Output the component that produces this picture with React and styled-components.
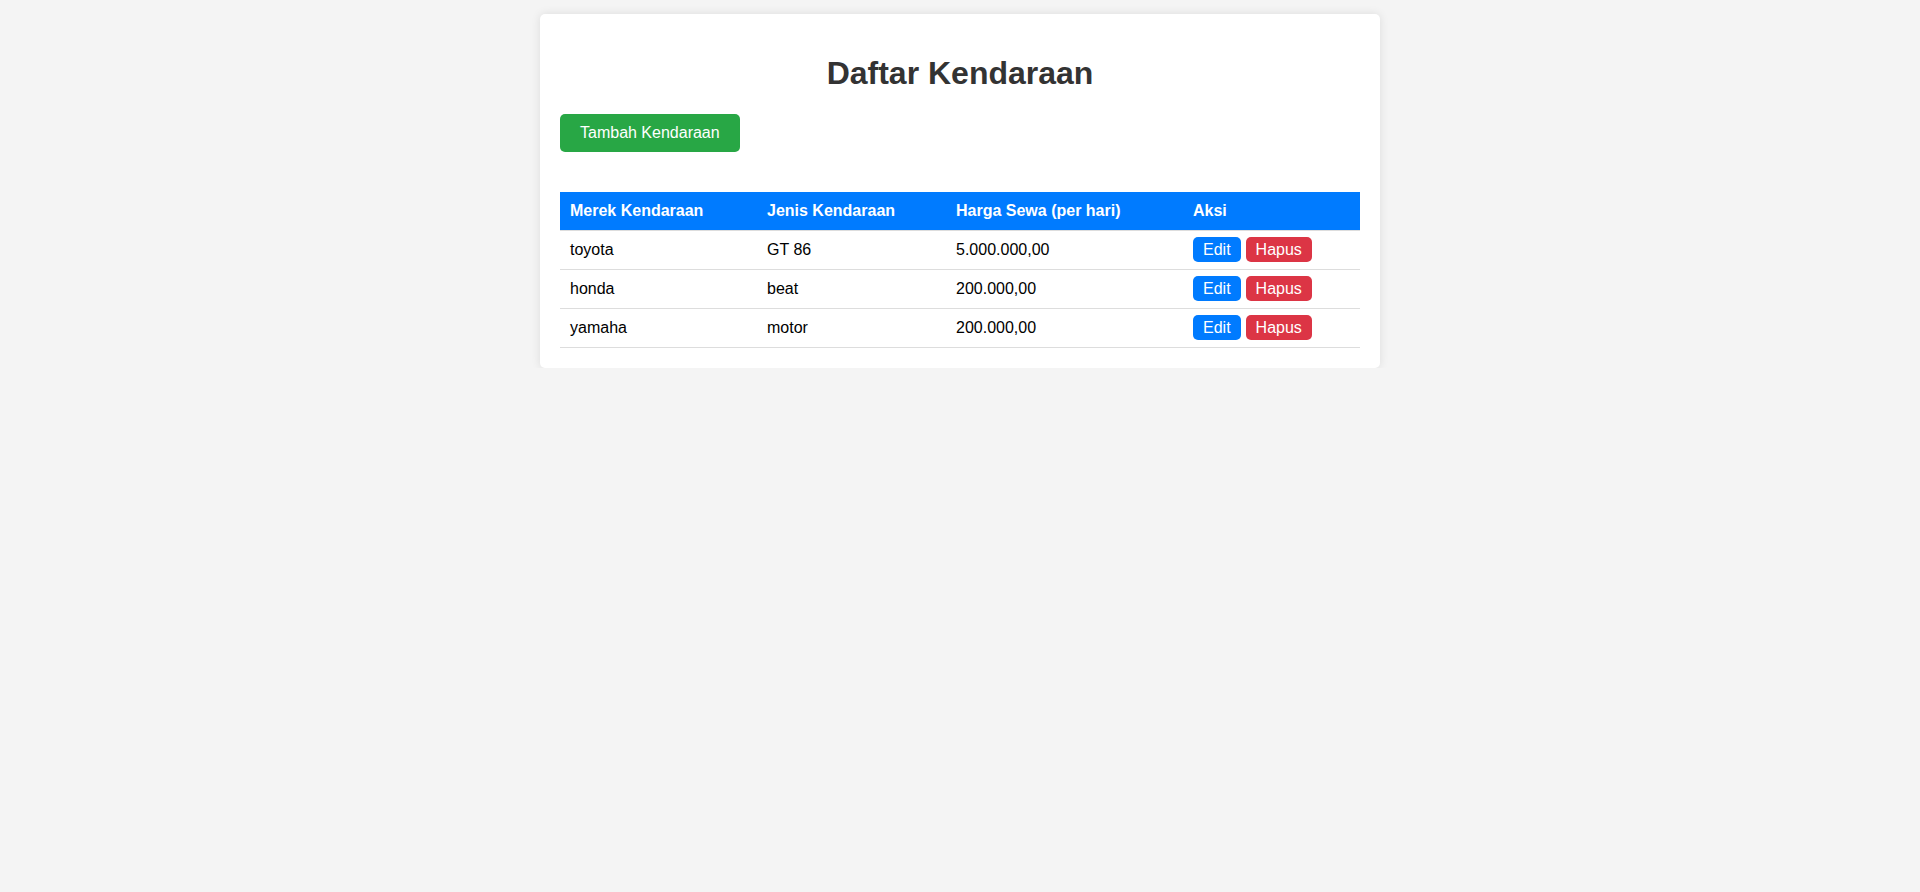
import React from 'react';
import styled, { createGlobalStyle } from 'styled-components';

const vehicles = [
  { id: 1, merek: 'toyota', jenis: 'GT 86', harga: '5.000.000,00' },
  { id: 2, merek: 'honda', jenis: 'beat', harga: '200.000,00' },
  { id: 3, merek: 'yamaha', jenis: 'motor', harga: '200.000,00' },
];

const columns = [
  { label: 'Merek Kendaraan', width: 197 },
  { label: 'Jenis Kendaraan', width: 189 },
  { label: 'Harga Sewa (per hari)', width: 237 },
  { label: 'Aksi', width: 177 },
];

export default function App() {
  return (
    <>
      <GlobalStyle />
      <Page>
        <Card>
          <Title>Daftar Kendaraan</Title>
          <AddButton>Tambah Kendaraan</AddButton>
          <Table>
            <thead>
              <tr>
                {columns.map(col => (
                  <Th key={col.label} $width={col.width}>
                    {col.label}
                  </Th>
                ))}
              </tr>
            </thead>
            <tbody>
              {vehicles.map(item => (
                <tr key={item.id}>
                  <Td>{item.merek}</Td>
                  <Td>{item.jenis}</Td>
                  <Td>{item.harga}</Td>
                  <Td>
                    <ActionBtn href="#" $variant="edit">Edit</ActionBtn>
                    <ActionBtn href="#" $variant="delete">Hapus</ActionBtn>
                  </Td>
                </tr>
              ))}
            </tbody>
          </Table>
        </Card>
      </Page>
    </>
  );
}

const GlobalStyle = createGlobalStyle`
  body {
    margin: 0;
    background: #f4f4f4;
    font-family: "Liberation Sans", Arial, sans-serif;
  }
`;

const Page = styled.div`
  padding-top: 14px;
`;

const Card = styled.div`
  width: 800px;
  margin: 0 auto;
  padding: 20px;
  background: #fff;
  border-radius: 5px;
  box-shadow: 0 0 10px rgba(0, 0, 0, 0.1);
`;

const Title = styled.h1`
  margin: 21.44px 0;
  font-size: 32px;
  text-align: center;
  color: #333;
`;

const AddButton = styled.button`
  display: inline-block;
  margin-bottom: 20px;
  padding: 10px 20px;
  border: none;
  border-radius: 5px;
  background: #28a745;
  color: #fff;
  font-family: inherit;
  font-size: 16px;
  line-height: normal;
  cursor: pointer;
`;

const Table = styled.table`
  width: 100%;
  margin-top: 20px;
  border-collapse: collapse;
  table-layout: fixed;
`;

const Th = styled.th`
  width: ${({ $width }) => $width}px;
  box-sizing: border-box;
  padding: 10px;
  text-align: left;
  background: #007bff;
  color: #fff;
  font-size: 16px;
  border-bottom: 1px solid #ddd;
`;

const Td = styled.td`
  padding: 10px;
  text-align: left;
  font-size: 16px;
  color: #000;
  border-bottom: 1px solid #ddd;
`;

const ActionBtn = styled.a`
  display: inline;
  margin-right: 5px;
  padding: 4px 10px;
  border-radius: 5px;
  color: #fff;
  text-decoration: none;
  background: ${({ $variant }) => ($variant === 'delete' ? '#dc3545' : '#007bff')};
`;
